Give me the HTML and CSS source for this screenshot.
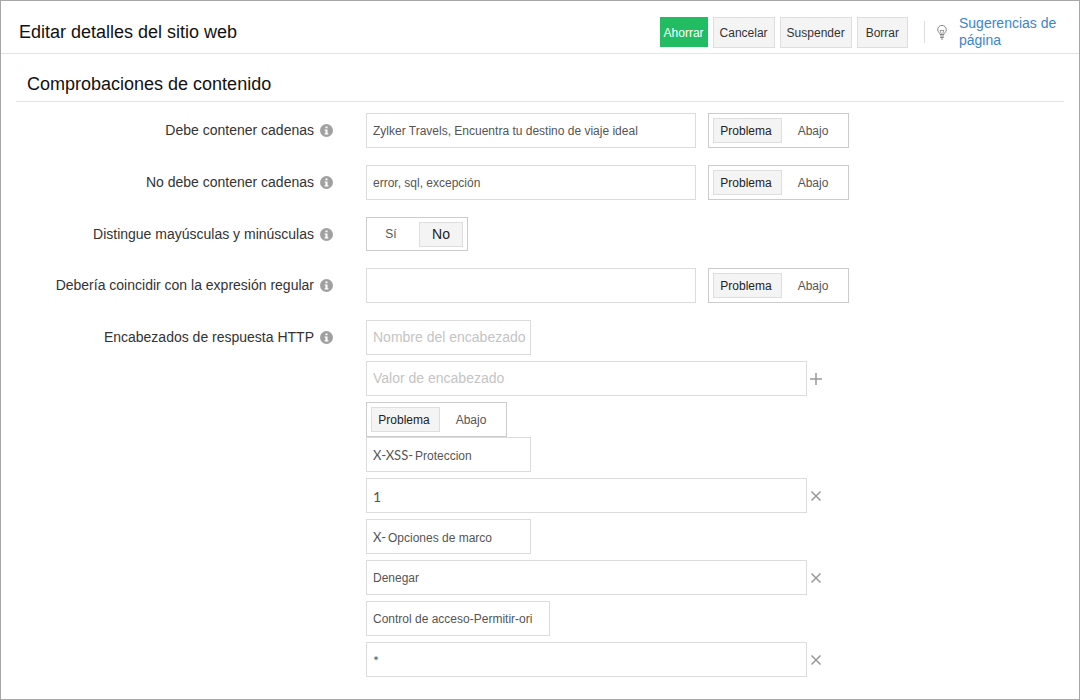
FILE: index.html
```html
<!DOCTYPE html>
<html lang="es">
<head>
<meta charset="utf-8">
<meta name="viewport" content="width=device-width, initial-scale=1">
<title>Editar detalles del sitio web</title>
<link rel="stylesheet" href="styles.css">
</head>
<body>
<svg class="sprite" aria-hidden="true">
  <symbol id="info" viewBox="0 0 13 13">
    <circle cx="6.5" cy="6.5" r="6.5" fill="#a0a0a0"/>
    <path d="M5.5 2.5h2v1.7h-2zM4.6 5.4h2.9v3.8h.9v1.2H4.6V9.2h.9V6.6h-.9z" fill="#fff"/>
  </symbol>
  <symbol id="plus" viewBox="0 0 12 12">
    <path d="M6 0v12M0 6h12" stroke="#999" stroke-width="1.5" fill="none"/>
  </symbol>
  <symbol id="cross" viewBox="0 0 12 12">
    <path d="M1.5 1.5l9 9M10.500 1.5l-9 9" stroke="#999" stroke-width="1.5" fill="none"/>
  </symbol>
</svg>
<div class="page">
  <header class="topbar">
    <h1 class="title">Editar detalles del sitio web</h1>
    <div class="actions">
      <button class="btn btn-primary" type="submit" form="checks">Ahorrar</button>
      <button class="btn" type="button">Cancelar</button>
      <button class="btn" type="button">Suspender</button>
      <button class="btn btn-delete" type="button">Borrar</button>
    </div>
    <div class="tips">
      <svg class="bulb" viewBox="0 0 10 15" fill="none" stroke="#888" stroke-width="1" aria-hidden="true">
        <path d="M3 9.500C2.800 7.800.7 7 .7 4.600A4.200 4.100 0 0 1 9.300 4.600C9.300 7 7.200 7.800 7 9.500z"/>
        <path d="M3.200 5l1 4M6.800 5l-1 4M3.200 5l.9 1 .9-1 .9 1 .9-1" stroke-width=".8"/>
        <path d="M3 11h4M3.200 12.500h3.600M4 14h2"/>
      </svg>
      <a class="tips-link" href="#sugerencias">Sugerencias de página</a>
    </div>
  </header>

  <main class="content">
    <h2 class="section-title">Comprobaciones de contenido</h2>
    <form class="form" id="checks">
      <div class="row">
        <div class="label"><label for="must">Debe contener cadenas</label><svg class="info"><use href="#info"/></svg></div>
        <div class="controls">
          <input class="field text" id="must" type="text" value="Zylker Travels, Encuentra tu destino de viaje ideal">
          <div class="toggle" role="group" aria-label="Debe contener cadenas">
            <button class="option selected" type="button" aria-pressed="true">Problema</button>
            <button class="option" type="button" aria-pressed="false">Abajo</button>
          </div>
        </div>
      </div>
      <div class="row">
        <div class="label"><label for="mustnot">No debe contener cadenas</label><svg class="info"><use href="#info"/></svg></div>
        <div class="controls">
          <input class="field text" id="mustnot" type="text" value="error, sql, excepción">
          <div class="toggle" role="group" aria-label="No debe contener cadenas">
            <button class="option selected" type="button" aria-pressed="true">Problema</button>
            <button class="option" type="button" aria-pressed="false">Abajo</button>
          </div>
        </div>
      </div>
      <div class="row">
        <div class="label"><span id="case-label">Distingue mayúsculas y minúsculas</span><svg class="info"><use href="#info"/></svg></div>
        <div class="controls">
          <div class="toggle toggle-yesno" role="group" aria-labelledby="case-label">
            <button class="option" type="button" aria-pressed="false">Sí</button>
            <button class="option selected" type="button" aria-pressed="true">No</button>
          </div>
        </div>
      </div>
      <div class="row">
        <div class="label"><label for="regex">Debería coincidir con la expresión regular</label><svg class="info"><use href="#info"/></svg></div>
        <div class="controls">
          <input class="field text" id="regex" type="text">
          <div class="toggle" role="group" aria-label="Debería coincidir con la expresión regular">
            <button class="option selected" type="button" aria-pressed="true">Problema</button>
            <button class="option" type="button" aria-pressed="false">Abajo</button>
          </div>
        </div>
      </div>
      <div class="row">
        <div class="label"><label for="header-name">Encabezados de respuesta HTTP</label><svg class="info"><use href="#info"/></svg></div>
        <div class="headers">
          <div class="header-group">
            <input class="field name" id="header-name" type="text" placeholder="Nombre del encabezado">
            <div class="value-line">
              <input class="field value" type="text" placeholder="Valor de encabezado" aria-label="Valor de encabezado">
              <button class="icon-btn" type="button" aria-label="Añadir"><svg class="icon"><use href="#plus"/></svg></button>
            </div>
            <div class="toggle" role="group" aria-label="Encabezados de respuesta HTTP">
              <button class="option selected" type="button" aria-pressed="true">Problema</button>
              <button class="option" type="button" aria-pressed="false">Abajo</button>
            </div>
          </div>
          <div class="header-group">
            <div class="field name prefixed">
              <label class="prefix" for="h1">X-XSS-</label>
              <input class="bare" id="h1" type="text" value="Proteccion">
            </div>
            <div class="value-line">
              <input class="field value latin" type="text" value="1" aria-label="Valor de X-XSS-Proteccion">
              <button class="icon-btn" type="button" aria-label="Quitar"><svg class="icon"><use href="#cross"/></svg></button>
            </div>
            <div class="field name prefixed">
              <label class="prefix" for="h2">X-</label>
              <input class="bare" id="h2" type="text" value="Opciones de marco">
            </div>
            <div class="value-line">
              <input class="field value" type="text" value="Denegar" aria-label="Valor de X-Opciones de marco">
              <button class="icon-btn" type="button" aria-label="Quitar"><svg class="icon"><use href="#cross"/></svg></button>
            </div>
            <input class="field name-long" type="text" value="Control de acceso-Permitir-ori" aria-label="Nombre del encabezado">
            <div class="value-line">
              <input class="field value latin" type="text" value="*" aria-label="Valor de Control de acceso">
              <button class="icon-btn" type="button" aria-label="Quitar"><svg class="icon"><use href="#cross"/></svg></button>
            </div>
          </div>
        </div>
      </div>
    </form>
  </main>
</div>
</body>
</html>
```
FILE: styles.css
```css
* {
  box-sizing: border-box;
}

body {
  margin: 0;
  background: #fff;
  color: #333;
  font: 14px/17px "Liberation Sans", Arial, sans-serif;
}

button,
input {
  font: inherit;
  color: inherit;
}

.sprite {
  position: absolute;
  width: 0;
  height: 0;
}

.page {
  min-height: 100vh;
  border: 1px solid #a6a6a6;
}

.topbar {
  display: flex;
  align-items: center;
  min-height: 53px;
  padding: 0 14px 0 18px;
  border-bottom: 1px solid #e4e4e4;
}

.title,
.section-title {
  margin: 0;
  color: #111;
  font-size: 18px;
  font-weight: normal;
  line-height: 22px;
}

.title {
  flex: 1;
  padding-top: 10px;
}

.actions {
  display: flex;
  align-items: center;
  gap: 5px;
  padding-top: 10px;
}

.btn {
  height: 31px;
  padding: 2px 6px 0;
  border: 1px solid #dedede;
  background: #f4f4f4;
  color: #333;
  font-size: 12px;
}

.btn-delete {
  padding: 2px 8px 0;
}

.btn-primary {
  height: 30px;
  padding: 2px 3px 0;
  border-color: #22bd62;
  background: #22bd62;
  color: #fff;
}

.tips {
  display: flex;
  align-items: center;
  gap: 12px;
  margin-left: 16px;
  padding-top: 10px;
}

.tips::before {
  content: "";
  width: 1px;
  height: 22px;
  background: #ddd;
}

.bulb {
  width: 10px;
  height: 15px;
}

.tips-link {
  width: 106px;
  color: #3d85c9;
  text-decoration: none;
}

.content {
  padding: 0 15px 22px;
}

.section-title {
  padding: 19px 11px 6px;
  border-bottom: 1px solid #e4e4e4;
}

.form {
  display: flex;
  flex-direction: column;
  gap: 17px;
  padding-top: 11px;
}

.row {
  display: grid;
  grid-template-columns: 317px minmax(0, 1fr);
  column-gap: 33px;
}

.label {
  display: flex;
  align-items: center;
  justify-content: flex-end;
  gap: 6px;
  height: 35px;
}

.row:nth-child(3) .label {
  height: 34px;
}

.info {
  width: 13px;
  height: 13px;
}

.controls {
  display: flex;
  gap: 12px;
}

.field {
  height: 35px;
  padding: 1px 3px 0 6px;
  border: 1px solid #dcdcdc;
  background: #fff;
  color: #555;
  font-size: 12px;
}

.field::placeholder {
  color: #c4c4c4;
  font-size: 14px;
  opacity: 1;
}

.text {
  width: 330px;
}

.name {
  width: 165px;
}

.name-long {
  width: 184px;
}

.value {
  width: 441px;
}

.latin {
  font-family: Lato, sans-serif;
  font-size: 14px;
}

.prefixed {
  display: flex;
  align-items: center;
  gap: 2px;
}

.prefix {
  font-family: Lato, sans-serif;
  font-size: 13px;
}

.bare {
  flex: 1;
  min-width: 0;
  padding: 2px 0 0;
  border: 0;
  background: none;
}

.toggle {
  display: flex;
  align-items: center;
  width: 141px;
  height: 35px;
  padding: 0 4px;
  border: 1px solid #ccc;
}

.option {
  width: 62px;
  height: 25px;
  padding: 1px 0 0;
  border: 1px solid transparent;
  background: none;
  color: #555;
  font-size: 12px;
}

.selected {
  width: 69px;
  padding-right: 3px;
  border-color: #dedede;
  background: #f4f4f4;
  color: #222;
}

.toggle-yesno {
  justify-content: space-between;
  width: 102px;
  height: 34px;
}

.toggle-yesno .option {
  width: 40px;
}

.toggle-yesno .selected {
  width: 44px;
  padding: 0;
  font-size: 14px;
}

.header-group {
  display: flex;
  flex-direction: column;
  align-items: flex-start;
  gap: 6px;
}

.value-line {
  display: flex;
  align-items: center;
  gap: 3px;
}

.icon-btn {
  display: flex;
  padding: 0;
  border: 0;
  background: none;
}

.icon {
  width: 12px;
  height: 12px;
}
```
